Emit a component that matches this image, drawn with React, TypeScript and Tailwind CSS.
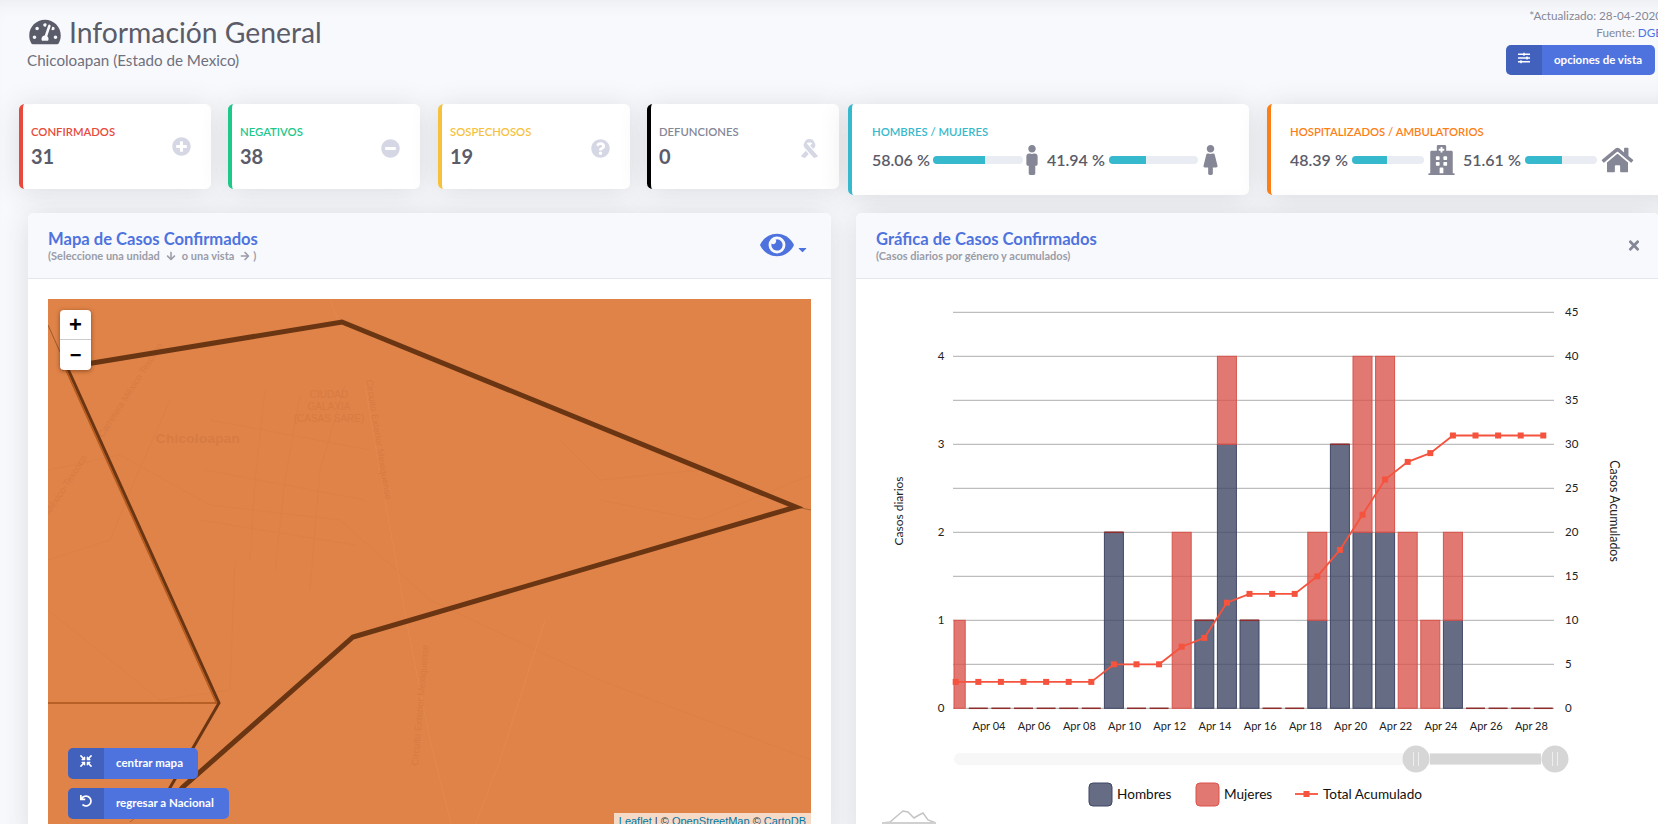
import React from "react";
import {
  FaTachometerAlt, FaPlusCircle, FaMinusCircle, FaQuestionCircle, FaRibbon, FaMale, FaFemale,
  FaHospital, FaHome, FaSlidersH, FaEye, FaCaretDown, FaTimes, FaCompressArrowsAlt, FaUndo,
  FaArrowDown, FaArrowRight,
} from "react-icons/fa";

const FONT = "font-['Lato','Noto_Sans',sans-serif]";

function StatCard({ label, value, labelCls, borderCls, icon, iconCls, cls }: { label: string; value: string; labelCls: string; borderCls: string; icon: React.ReactNode; iconCls: string; cls: string }) {
  return (
    <div className={`h-[85px] w-[192px] shrink-0 rounded-[5.6px] border-l-4 bg-white pl-[8px] pr-[20px] pt-[20px] shadow-[0_2.4px_28px_0_rgba(58,59,69,0.15)] ${borderCls} ${cls}`}>
      <div className={`text-[11.3px] font-semibold uppercase leading-[16px] ${labelCls}`}>{label}</div>
      <div className="flex items-start justify-between">
        <div className="mt-[3px] text-[20px] font-bold leading-[26px] text-[#5a5c69]">{value}</div>
        <div className={`text-[19px] text-[#d5d7e5] ${iconCls}`}>{icon}</div>
      </div>
    </div>
  );
}

function Bar({ fill, w }: { fill: string; w: string }) {
  return (
    <div className={`h-[8px] shrink-0 overflow-hidden rounded-full bg-[#eaecf4] ${w}`}>
      <div className={`h-full bg-[#36b9cc] ${fill}`} />
    </div>
  );
}

function PanelHeader({ title, sub, right }: { title: string; sub: React.ReactNode; right: React.ReactNode }) {
  return (
    <div className="flex h-[66px] items-center justify-between border-b border-[#e3e6f0] bg-[#f8f9fc] pl-[20px] pr-[19px]">
      <div>
        <div className="text-[16.6px] font-bold leading-[20px] text-[#4e73df]">{title}</div>
        <div className="flex items-center gap-[3px] text-[11px] font-bold leading-[14px] text-[#9a9ca8]">{sub}</div>
      </div>
      {right}
    </div>
  );
}

function IconButton({ icon, text, w }: { icon: React.ReactNode; text: string; w: string }) {
  return (
    <div className={`flex h-[31px] items-stretch overflow-hidden rounded-[5px] bg-[#4e73df] text-white ${w}`}>
      <div className="flex w-[36px] shrink-0 items-start justify-center bg-[rgba(0,0,0,0.15)] pt-[7px] text-[12px]">{icon}</div>
      <div className="flex-1 pl-[12px] pt-[6px] text-[11.5px] font-bold leading-[17px]">{text}</div>
    </div>
  );
}

function MapView() {
  return (
    <div className="relative h-[540px] w-[763px] overflow-hidden bg-[#e08348]">
      <svg viewBox="48 299 763 540" className="block h-full w-full">
        <g fill="none" stroke="#dc7f45" strokeWidth="1" opacity="0.6">
          <path d="M48 470 L120 455 L210 505 L340 520 L430 600 L600 680 L811 760" />
          <path d="M48 560 L110 540 L135 480 L170 400" />
          <path d="M265 390 L255 480 L250 560 M300 395 L285 480 L275 570 M345 385 L320 470 L310 590" />
          <path d="M210 420 L370 450 M205 470 L365 500 M200 520 L355 545" />
          <path d="M600 500 L700 520 L811 475 M560 440 L600 480 L700 470" />
          <path d="M48 610 L160 700 L230 690 L235 560" />
        </g>
        <g fill="none" stroke="#e58b53" strokeWidth="1" opacity="0.7">
          <path d="M365 385 L385 500 L410 640 L430 740 L455 839" />
          <path d="M545 620 L500 760 L470 839" />
          <path d="M330 300 L340 325" />
        </g>
        <g fill="#d67b44" fontFamily="'Liberation Sans', sans-serif">
          <text x="198" y="443" fontSize="13.5" fontWeight="700" textAnchor="middle" letterSpacing="0.3">Chicoloapan</text>
          <text x="329" y="398" fontSize="10" textAnchor="middle">CIUDAD</text>
          <text x="329" y="410" fontSize="10" textAnchor="middle">GALAXIA</text>
          <text x="329" y="422" fontSize="10" textAnchor="middle">(CASAS SARE)</text>
          <text transform="translate(366 380) rotate(81)" fontSize="9.5">Circuito Exterior Mexiquense</text>
          <text transform="translate(418 766) rotate(-85)" fontSize="9.5">Circuito Exterior Mexiquense</text>
          <text transform="translate(103 438) rotate(-57)" fontSize="9.5">Carretera México Texcoco</text>
          <text transform="translate(50 515) rotate(-57)" fontSize="9.5">México-Texcoco</text>
        </g>
        <path d="M48 325 L60 352" stroke="#9a5a2c" strokeWidth="1" fill="none" />
        <path d="M796 507 L811 510" stroke="#a86434" strokeWidth="1" fill="none" />
        <path d="M48 703 L219 703" stroke="#a9541c" strokeWidth="1.5" fill="none" />
        <path d="M130 822 L142 812" stroke="#a86434" strokeWidth="1" fill="none" />
        <path d="M63 358 L219 703" stroke="#b5591c" strokeWidth="1.5" fill="none" transform="translate(-2.6 0)" />
        <path d="M63 358 L219 703 L160 805" stroke="#6a3513" strokeWidth="3" fill="none" strokeLinejoin="miter" />
        <path d="M62 368 L342 322 L796 507 L353 637 L183 787 L160 813" stroke="#6a3513" strokeWidth="5" fill="none" strokeLinejoin="miter" />
      </svg>

      <div className="absolute left-[12px] top-[11px] w-[31px] overflow-hidden rounded-[4px] bg-white shadow-[0_1px_4px_rgba(90,40,10,0.65)]">
        <div className="flex h-[30px] items-center justify-center border-b border-[#ccc] font-['Liberation_Sans',sans-serif] text-[22px] font-bold leading-none text-black">+</div>
        <div className="flex h-[30px] items-center justify-center font-['Liberation_Sans',sans-serif] text-[20px] font-bold leading-none text-black">−</div>
      </div>

      <div className="absolute left-[20px] top-[449px] flex flex-col gap-[9px]">
        <IconButton icon={<FaCompressArrowsAlt />} text="centrar mapa" w="w-[130px]" />
        <IconButton icon={<FaUndo />} text="regresar a Nacional" w="w-[161px]" />
      </div>

      <div className="absolute right-0 top-[514px] bg-[rgba(255,255,255,0.7)] px-[5px] font-['Liberation_Sans',sans-serif] text-[11px] leading-[17px] text-[#333]">
        <span className="text-[#0078a8]">Leaflet</span> | © <span className="text-[#0078a8]">OpenStreetMap</span> © <span className="text-[#0078a8]">CartoDB</span>
      </div>
    </div>
  );
}

const male: Record<number, number> = { 7: 2, 11: 1, 12: 3, 13: 1, 16: 1, 17: 3, 18: 2, 19: 2, 22: 1 };
const female: Record<number, number> = { 0: 1, 10: 2, 12: 1, 16: 1, 18: 2, 19: 2, 20: 2, 21: 1, 22: 1 };
const cumulative = [3, 3, 3, 3, 3, 3, 3, 5, 5, 5, 7, 8, 12, 13, 13, 13, 15, 18, 22, 26, 28, 29, 31, 31, 31, 31, 31];

function Chart() {
  const x0 = 955.7;
  const step = 22.6;
  const bottom = 708.3;
  const xAt = (i: number) => x0 + i * step;
  const yCum = (v: number) => bottom - v * 8.8;
  const grid = Array.from({ length: 10 }, (_, i) => i * 5);
  const labels = ["Apr 04", "Apr 06", "Apr 08", "Apr 10", "Apr 12", "Apr 14", "Apr 16", "Apr 18", "Apr 20", "Apr 22", "Apr 24", "Apr 26", "Apr 28"];
  const linePts = cumulative.map((v, i) => `${xAt(i)},${yCum(v)}`).join(" ");
  return (
    <svg viewBox="856 279 803 560" className="block h-[560px] w-[803px]" fontFamily="Lato, 'Noto Sans', sans-serif">
      {grid.map((v) => (
        <g key={v}>
          <line x1="953" x2="1554" y1={yCum(v)} y2={yCum(v)} stroke="#adadad" strokeWidth="1" />
          <text x="1565" y={yCum(v) + 4} fontSize="11.5" fill="#222">{v}</text>
        </g>
      ))}
      {[0, 1, 2, 3, 4].map((v) => (
        <text key={v} x="941" y={bottom - v * 88 + 4} fontSize="11.5" fill="#222" textAnchor="middle">{v}</text>
      ))}
      <text transform="translate(903 511) rotate(-90)" fontSize="12" fill="#222" textAnchor="middle">Casos diarios</text>
      <text transform="translate(1610 511) rotate(90)" fontSize="12.4" fill="#222" textAnchor="middle">Casos Acumulados</text>
      {cumulative.map((_, i) => {
        const m = male[i] ?? 0;
        const f = female[i] ?? 0;
        const cx = xAt(i);
        const left = Math.max(cx - 9.5, 954);
        const w = cx + 9.5 - left;
        const mTop = bottom - m * 88;
        const fTop = mTop - f * 88;
        return (
          <g key={i}>
            {m > 0 && <rect x={left} y={mTop} width={w} height={m * 88} fill="#3f4765" fillOpacity="0.8" stroke="#3f4765" strokeWidth="1" />}
            {f > 0 && <rect x={left} y={fTop} width={w} height={f * 88} fill="#d9534a" fillOpacity="0.78" stroke="#d9534a" strokeWidth="1" />}
            {f === 0 && <line x1={left} x2={left + w} y1={mTop} y2={mTop} stroke="#8f2c2c" strokeWidth="1.5" />}
          </g>
        );
      })}
      <polyline points={linePts} fill="none" stroke="#f5533d" strokeWidth="1.8" />
      {cumulative.map((v, i) => (
        <rect key={i} x={xAt(i) - 3} y={yCum(v) - 3} width="6" height="6" fill="#f5533d" />
      ))}
      {labels.map((l, i) => (
        <text key={l} x={989 + i * 45.2} y="730" fontSize="11" fill="#222" textAnchor="middle">{l}</text>
      ))}
      <rect x="954" y="753" width="588" height="12" rx="6" fill="#f7f7f7" />
      <rect x="1430" y="753.5" width="111" height="11" fill="#d6d6d6" />
      {[1416, 1555].map((cx) => (
        <g key={cx}>
          <circle cx={cx} cy="759" r="13.5" fill="#d6d6d6" />
          <line x1={cx - 2.5} x2={cx - 2.5} y1="752" y2="766" stroke="#eeeeee" strokeWidth="1" />
          <line x1={cx + 2.5} x2={cx + 2.5} y1="752" y2="766" stroke="#eeeeee" strokeWidth="1" />
        </g>
      ))}
      <rect x="1089" y="783" width="23" height="23" rx="4" fill="#3f4765" fillOpacity="0.8" stroke="#3f4765" />
      <text x="1117" y="799" fontSize="13.6" fill="#111">Hombres</text>
      <rect x="1196" y="783" width="23" height="23" rx="4" fill="#d9534a" fillOpacity="0.78" stroke="#d9534a" />
      <text x="1224" y="799" fontSize="13.6" fill="#111">Mujeres</text>
      <line x1="1295" x2="1318" y1="794" y2="794" stroke="#f5533d" strokeWidth="1.8" />
      <rect x="1303.5" y="791" width="6" height="6" fill="#f5533d" />
      <text x="1323" y="799" fontSize="13.6" fill="#111">Total Acumulado</text>
      <path d="M882 823 L890 822 L897 816 L903 811 L908 812 L914 818 L919 815 L923 813 L928 820 L936 823" fill="none" stroke="#c4c4c4" strokeWidth="1.5" />
      <rect x="882" y="822" width="54" height="4" fill="#d0d0d0" />
    </svg>
  );
}

export default function App() {
  return (
    <div className={`h-[824px] w-full overflow-hidden bg-[#f8f9fc] shadow-[inset_0_14px_18px_-12px_rgba(58,59,69,0.08)] ${FONT}`}>
      <div className="flex h-[104px] w-[1658px] justify-between pl-[27px] pr-[3px]">
        <div className="pt-[15px]">
          <div className="ml-[2px] flex items-center gap-[8px] text-[#5a5c69]">
            <FaTachometerAlt className="h-[28px] w-[32px]" />
            <div className="text-[28.3px] leading-[34px]">Información General</div>
          </div>
          <div className="text-[15.2px] leading-[22px] text-[#6e707e]">Chicoloapan (Estado de Mexico)</div>
        </div>
        <div className="flex flex-col items-end">
          <div className="-mr-[7px] pt-[7px] text-right text-[11.7px] leading-[17px] text-[#858796]">
            <div>*Actualizado: 28-04-2020</div>
            <div>Fuente: <span className="text-[#4e73df]">DGE</span></div>
          </div>
          <div className="mt-[4px] flex h-[30px] w-[149px] overflow-hidden rounded-[5px] bg-[#4e73df] text-white">
            <div className="flex w-[36px] items-start justify-center bg-[rgba(0,0,0,0.15)] pt-[7px] text-[12px]"><FaSlidersH /></div>
            <div className="flex-1 pl-[12px] pt-[6px] text-[11.5px] font-bold leading-[17px]">opciones de vista</div>
          </div>
        </div>
      </div>

      <div className="flex h-[91px] w-[1700px] items-start pl-[19px]">
        <StatCard cls="" label="Confirmados" value="31" labelCls="text-[#e74a3b]" borderCls="border-[#e74a3b]" icon={<FaPlusCircle />} iconCls="-mt-[3px]" />
        <StatCard cls="ml-[17px]" label="Negativos" value="38" labelCls="text-[#1cc88a]" borderCls="border-[#1cc88a]" icon={<FaMinusCircle />} iconCls="-mt-[1px]" />
        <StatCard cls="ml-[18px]" label="Sospechosos" value="19" labelCls="text-[#f6c23e]" borderCls="border-[#f6c23e]" icon={<FaQuestionCircle />} iconCls="-mt-[1px]" />
        <StatCard cls="ml-[17px]" label="Defunciones" value="0" labelCls="text-[#858796]" borderCls="border-black" icon={<FaRibbon />} iconCls="-mt-[1px]" />

        <div className="ml-[9px] h-[91px] w-[401px] shrink-0 rounded-[5.6px] border-l-4 border-[#36b9cc] bg-white pl-[20px] pt-[20px] shadow-[0_2.4px_28px_0_rgba(58,59,69,0.15)]">
          <div className="text-[11.3px] font-semibold uppercase leading-[16px] text-[#36b9cc]">Hombres / Mujeres</div>
          <div className="mt-[5px] flex items-center text-[#5a5c69]">
            <div className="w-[61px] shrink-0 text-[16px] font-semibold">58.06 %</div>
            <Bar w="w-[90px]" fill="w-[58%]" />
            <FaMale className="h-[30px] w-[18px] shrink-0 text-[#858796]" />
            <div className="ml-[6px] w-[62px] shrink-0 text-[16px] font-semibold">41.94 %</div>
            <Bar w="w-[89px]" fill="w-[42%]" />
            <FaFemale className="ml-[3px] h-[30px] w-[19px] shrink-0 text-[#858796]" />
          </div>
        </div>

        <div className="ml-[18px] h-[91px] w-[420px] shrink-0 rounded-[5.6px] border-l-4 border-[#fd7e14] bg-white pl-[19px] pt-[20px] shadow-[0_2.4px_28px_0_rgba(58,59,69,0.15)]">
          <div className="text-[11.3px] font-semibold uppercase leading-[16px] text-[#fd7e14]">Hospitalizados / Ambulatorios</div>
          <div className="mt-[5px] flex items-center text-[#5a5c69]">
            <div className="w-[62px] shrink-0 text-[16px] font-semibold">48.39 %</div>
            <Bar w="w-[72px]" fill="w-[48%]" />
            <FaHospital className="ml-[4px] h-[30px] w-[27px] shrink-0 text-[#858796]" />
            <div className="ml-[8px] w-[62px] shrink-0 text-[16px] font-semibold">51.61 %</div>
            <Bar w="w-[72px]" fill="w-[52%]" />
            <FaHome className="ml-[4px] h-[28px] w-[33px] shrink-0 text-[#858796]" />
          </div>
        </div>
      </div>

      <div className="mt-[18px] flex w-[1700px] items-start pl-[28px]">
        <div className="w-[803px] shrink-0 overflow-hidden rounded-[5.6px] bg-white shadow-[0_2.4px_28px_0_rgba(58,59,69,0.15)]">
          <PanelHeader
            title="Mapa de Casos Confirmados"
            sub={<>(Seleccione una unidad <FaArrowDown className="mx-[3px] h-[10px] w-[10px]" /> o una vista <FaArrowRight className="ml-[3px] h-[10px] w-[10px]" />)</>}
            right={
              <div className="mb-[2px] mr-[5px] flex items-end text-[#4e73df]">
                <FaEye className="h-[30px] w-[34px]" />
                <FaCaretDown className="mb-[4px] ml-[4px] h-[13px] w-[9px]" />
              </div>
            }
          />
          <div className="pl-[20px] pt-[20px]">
            <MapView />
          </div>
        </div>
        <div className="ml-[25px] w-[803px] shrink-0 overflow-hidden rounded-[5.6px] bg-white shadow-[0_2.4px_28px_0_rgba(58,59,69,0.15)]">
          <PanelHeader
            title="Gráfica de Casos Confirmados"
            sub="(Casos diarios por género y acumulados)"
            right={<FaTimes className="h-[15px] w-[12px] text-[#858796]" />}
          />
          <Chart />
        </div>
      </div>
    </div>
  );
}
